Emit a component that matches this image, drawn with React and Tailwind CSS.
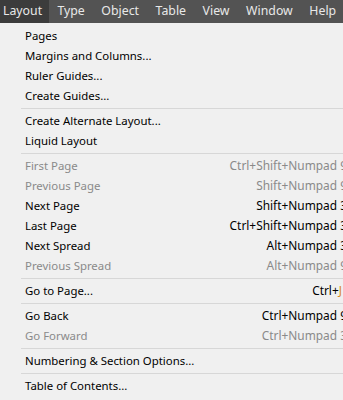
const menus = ["Layout", "Type", "Object", "Table", "View", "Window", "Help"];

const items = [
  { label: "Pages" },
  { label: "Margins and Columns..." },
  { label: "Ruler Guides..." },
  { label: "Create Guides..." },
  { sep: true },
  { label: "Create Alternate Layout..." },
  { label: "Liquid Layout" },
  { sep: true },
  { label: "First Page", keys: "Ctrl+Shift+Numpad 9", off: true },
  { label: "Previous Page", keys: "Shift+Numpad 9", off: true },
  { label: "Next Page", keys: "Shift+Numpad 3" },
  { label: "Last Page", keys: "Ctrl+Shift+Numpad 3" },
  { label: "Next Spread", keys: "Alt+Numpad 3" },
  { label: "Previous Spread", keys: "Alt+Numpad 9", off: true },
  { sep: true },
  { label: "Go to Page...", keys: "Ctrl+", hot: "J" },
  { sep: true },
  { label: "Go Back", keys: "Ctrl+Numpad 9" },
  { label: "Go Forward", keys: "Ctrl+Numpad 3", off: true },
  { sep: true },
  { label: "Numbering & Section Options..." },
  { sep: true },
  { label: "Table of Contents..." },
];

export default function App() {
  return (
    <div
      className="w-[343px] h-[400px] overflow-hidden bg-[#f0f0f0] text-[11.4px]"
      style={{ fontFamily: "'Noto Sans', sans-serif" }}
    >
      {/* menu bar */}
      <div className="flex h-[23px] items-stretch bg-[#535353] text-[#e8e8e8] text-[12.3px]">
        {menus.map((m, i) => (
          <div
            key={m}
            className={
              i === 0
                ? "flex items-center pl-[3px] pr-[7px] bg-[#3c3c3c]"
                : "flex items-center px-[8.3px]"
            }
          >
            {m}
          </div>
        ))}
      </div>

      {/* dropdown */}
      <div className="w-[355px] pt-[3px]">
        {items.map((it, i) =>
          it.sep ? (
            <div key={i} className="h-[5px] flex items-center pl-[21px]">
              <div className="h-px w-full bg-[#d7d7d7]" />
            </div>
          ) : (
            <div
              key={i}
              className={`flex h-[20px] items-center justify-between pl-[25px] pr-[8px] ${
                it.off ? "text-[#8a8a8a]" : "text-black"
              }`}
            >
              <span>{it.label}</span>
              {it.keys && (
                <span className={it.hot ? "text-[11.9px] mr-[5px]" : "text-[11.9px]"}>
                  {it.keys}
                  {it.hot && <span className="text-[#d98a1c]">{it.hot}</span>}
                </span>
              )}
            </div>
          )
        )}
      </div>
    </div>
  );
}
